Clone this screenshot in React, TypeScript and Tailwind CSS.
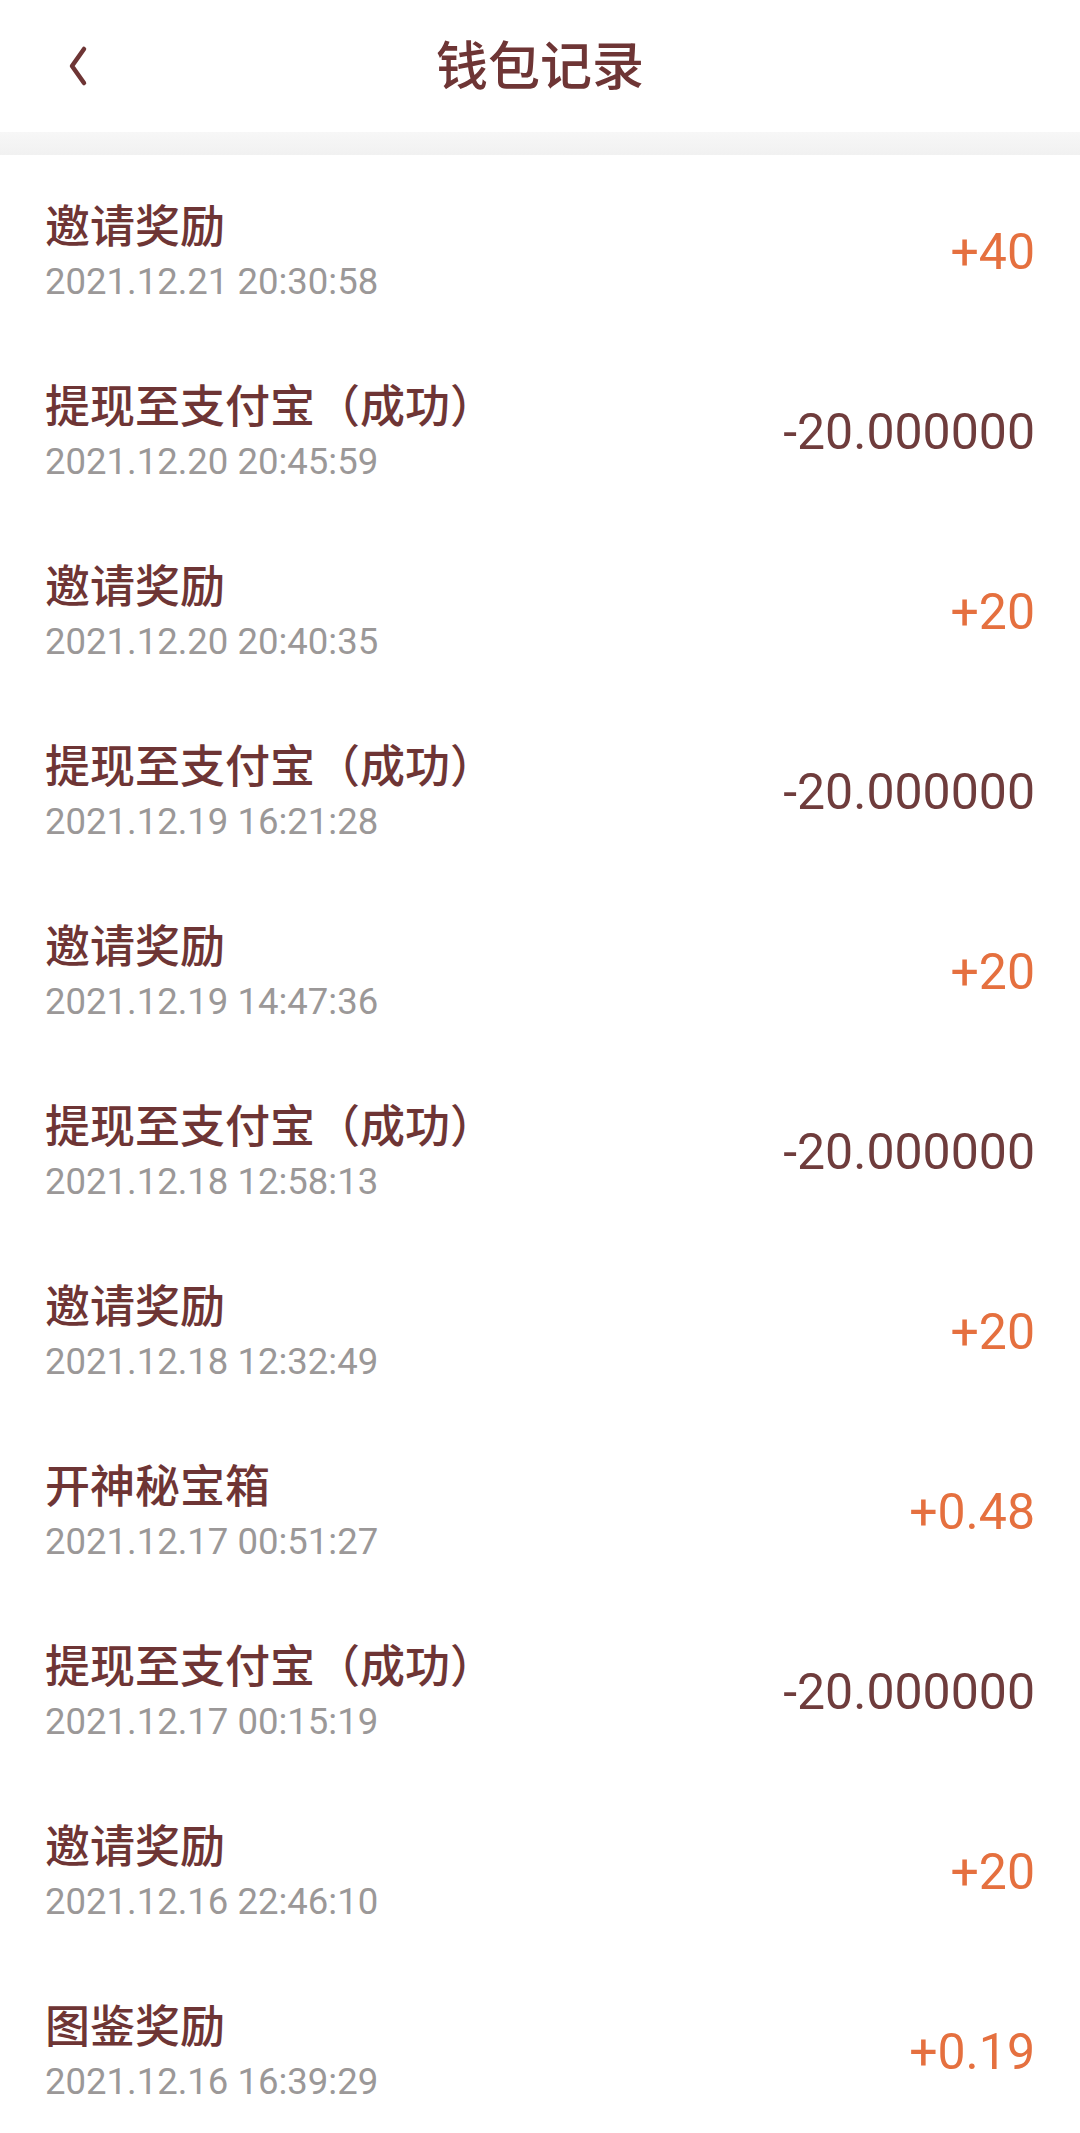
const RECORDS = [
  { title: "邀请奖励", time: "2021.12.21 20:30:58", amount: "+40" },
  { title: "提现至支付宝（成功）", time: "2021.12.20 20:45:59", amount: "-20.000000" },
  { title: "邀请奖励", time: "2021.12.20 20:40:35", amount: "+20" },
  { title: "提现至支付宝（成功）", time: "2021.12.19 16:21:28", amount: "-20.000000" },
  { title: "邀请奖励", time: "2021.12.19 14:47:36", amount: "+20" },
  { title: "提现至支付宝（成功）", time: "2021.12.18 12:58:13", amount: "-20.000000" },
  { title: "邀请奖励", time: "2021.12.18 12:32:49", amount: "+20" },
  { title: "开神秘宝箱", time: "2021.12.17 00:51:27", amount: "+0.48" },
  { title: "提现至支付宝（成功）", time: "2021.12.17 00:15:19", amount: "-20.000000" },
  { title: "邀请奖励", time: "2021.12.16 22:46:10", amount: "+20" },
  { title: "图鉴奖励", time: "2021.12.16 16:39:29", amount: "+0.19" },
];

export default function App() {
  return (
    <div className="min-h-screen bg-white font-['Roboto','Noto_Sans_CJK_SC',sans-serif]">
      <header className="relative flex h-[132px] items-center justify-center bg-white">
        <button
          type="button"
          aria-label="返回"
          className="absolute left-[58px] top-[44px] flex h-[44px] w-[40px] items-center justify-center"
        >
          <svg width="28" height="42" viewBox="0 0 28 42" fill="none">
            <path
              d="M20 4 L8 21 L20 38"
              stroke="#6e3535"
              strokeWidth="4.5"
              strokeLinecap="round"
              strokeLinejoin="round"
            />
          </svg>
        </button>
        <h1 className="mt-[4px] text-[52px] font-medium leading-none text-[#6e3535]">
          钱包记录
        </h1>
      </header>

      <div className="h-[23px] bg-gradient-to-b from-[#f7f7f7] to-[#f1f1f1]" />

      <ul className="pt-[7px]">
        {RECORDS.map((r, i) => {
          const plus = r.amount.startsWith("+");
          return (
            <li
              key={i}
              className="flex h-[180px] items-center justify-between px-[45px]"
            >
              <div className="flex flex-col">
                <span className="text-[45px] font-medium leading-[56px] text-[#6e3535]">
                  {r.title}
                </span>
                <span className="mt-[4px] text-[36.5px] leading-[44px] text-[#9b9898]">
                  {r.time}
                </span>
              </div>
              <span
                className={
                  plus
                    ? "text-[50px] leading-none text-[#e5703f]"
                    : "text-[50px] leading-none text-[#6f3c3c]"
                }
              >
                {r.amount}
              </span>
            </li>
          );
        })}
      </ul>
    </div>
  );
}
